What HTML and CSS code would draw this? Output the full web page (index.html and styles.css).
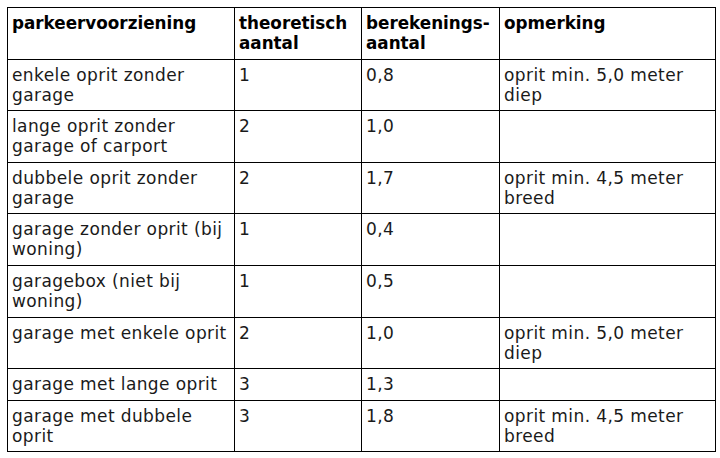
FILE: index.html
```html
<!DOCTYPE html>
<html lang="nl">
<head>
<meta charset="utf-8">
<link rel="stylesheet" href="styles.css">
</head>
<body>
<table class="parking">
  <colgroup>
    <col class="c1"><col class="c2"><col class="c3"><col class="c4">
  </colgroup>
  <thead>
    <tr><th>parkeervoorziening</th><th>theoretisch aantal</th><th>berekenings-<br>aantal</th><th>opmerking</th></tr>
  </thead>
  <tbody>
    <tr><td>enkele oprit zonder garage</td><td>1</td><td>0,8</td><td>oprit min. 5,0 meter diep</td></tr>
    <tr><td>lange oprit zonder garage of carport</td><td>2</td><td>1,0</td><td></td></tr>
    <tr><td>dubbele oprit zonder garage</td><td>2</td><td>1,7</td><td>oprit min. 4,5 meter breed</td></tr>
    <tr><td>garage zonder oprit (bij woning)</td><td>1</td><td>0,4</td><td></td></tr>
    <tr><td>garagebox (niet bij woning)</td><td>1</td><td>0,5</td><td></td></tr>
    <tr><td>garage met enkele oprit</td><td>2</td><td>1,0</td><td>oprit min. 5,0 meter diep</td></tr>
    <tr><td>garage met lange oprit</td><td>3</td><td>1,3</td><td></td></tr>
    <tr><td>garage met dubbele oprit</td><td>3</td><td>1,8</td><td>oprit min. 4,5 meter breed</td></tr>
  </tbody>
</table>
</body>
</html>
```
FILE: styles.css
```css
html, body {
  margin: 0;
  background: #fff;
}
body {
  padding: 7px;
  font-family: "DejaVu Sans", Verdana, sans-serif;
  font-size: 17px;
  letter-spacing: 0.4px;
  line-height: 20px;
  color: #1a1a1a;
}
.parking {
  border-collapse: collapse;
  table-layout: fixed;
  width: 708px;
  border: 1px solid #000;
}
.c1 { width: 227px; }
.c2 { width: 127px; }
.c3 { width: 138px; }
.c4 { width: 216px; }
.parking th,
.parking td {
  border: 1px solid #000;
  padding: 5px 4px 5.6px 4px;
  text-align: left;
  vertical-align: top;
}
.parking th {
  font-weight: bold;
  font-size: 16.8px;
  letter-spacing: 0;
  color: #000;
}
```
